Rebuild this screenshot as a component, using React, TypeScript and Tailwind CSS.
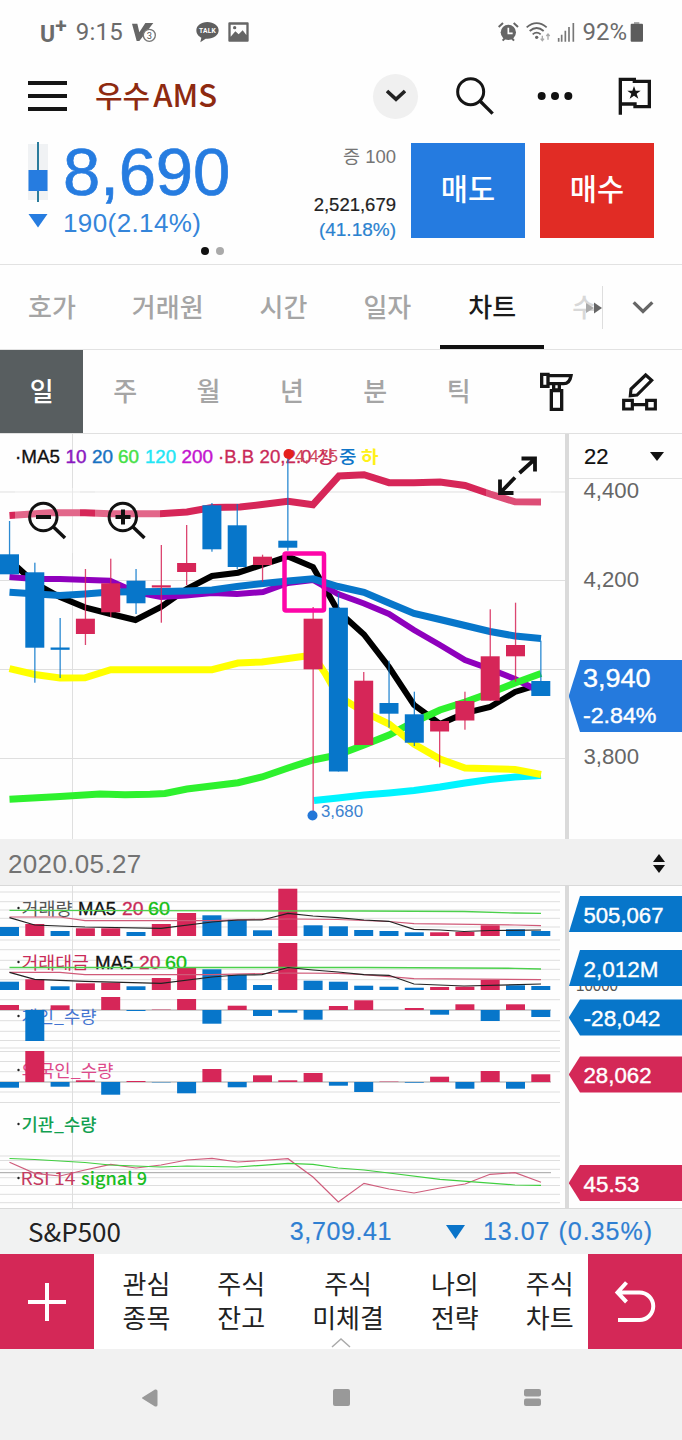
import React from "react";

const RED = "#d62658";
const BLUE = "#0776ca";
const SANS = "'Liberation Sans','Noto Sans CJK KR',sans-serif";
const KR = "'Noto Sans CJK KR',sans-serif";

const cx = (i: number) => 9.5 + 25.3 * i;

type LabelProps = {
  x: number;
  y: number;
  w: number;
  fill: string;
  size?: number;
  font?: string;
  weight?: number;
  stroke?: number;
  children: string;
};

function Label({ x, y, w, fill, size = 17.5, font = SANS, weight = 400, stroke = 0, children }: LabelProps) {
  return (
    <text
      x={x}
      y={y}
      textLength={w}
      lengthAdjust="spacingAndGlyphs"
      fontSize={size}
      fontFamily={font}
      fontWeight={weight}
      fill={fill}
      stroke={stroke ? fill : "none"}
      strokeWidth={stroke}
    >
      {children}
    </text>
  );
}

function Line({ pts, color, w }: { pts: string; color: string; w: number }) {
  return <polyline points={pts} fill="none" stroke={color} strokeWidth={w} strokeLinejoin="miter" />;
}

/* direction, body top, body bottom, wick top, wick bottom */
type Candle = ["u" | "d", number, number, number, number];
const candles: Candle[] = [
  ["d", 554.3, 574.3, 521, 574],
  ["d", 572.3, 647.7, 562.7, 682.7],
  ["d", 647.5, 649.8, 618, 678],
  ["u", 618.7, 634, 569, 645],
  ["u", 583.3, 612.3, 558.7, 617],
  ["d", 580.7, 603.3, 569, 614],
  ["u", 585.3, 587.5, 545, 622.7],
  ["u", 563, 572, 525, 585],
  ["d", 505.3, 549.3, 503, 551.7],
  ["d", 525.3, 567, 504, 569.3],
  ["u", 556.7, 565, 554.7, 581.7],
  ["d", 540.7, 547.7, 458, 550.7],
  ["u", 618.7, 669.3, 607, 814],
  ["d", 607.7, 771.5, 593, 771.5],
  ["u", 680.7, 745, 672, 745],
  ["d", 703, 713.7, 660.7, 727.7],
  ["d", 714.3, 742.7, 691.7, 746],
  ["u", 721, 731.5, 721, 767.3],
  ["u", 701, 720.5, 691.7, 729.7],
  ["u", 656.3, 700.7, 609.3, 700.7],
  ["u", 645, 656.3, 602.7, 681.7],
  ["d", 681, 696, 640.7, 696],
];

const volumeTops = [927, 924, 931, 928.3, 928.3, 932, 924, 913, 915.3, 919.7, 930.3, 888.7, 925.3, 926.3, 930, 931, 932.3, 932.3, 932, 925.3, 929.3, 931];
const amountTops = [981.7, 979.3, 986.3, 983.3, 982.7, 986.3, 978, 968, 969.3, 975, 985, 943, 980.7, 981.7, 985.7, 986.7, 987.7, 987, 986.7, 980, 985.3, 986];
const barDir = "duduuduudddudddddu" + "uudd";
const individual = [5, -31, 4.7, 0, 13, -1, 0.4, 11, -13.7, 4.3, -6, -2.7, -9.7, 4, 9.7, 0, 2, -4.7, 5.7, -11, 5.7, -7];
const foreigner = [-5.7, 31, -4.7, 1.7, -12.7, 1, -0.4, -11.3, 13, -5.3, 6.7, 1.7, 9, -3.7, -10, 0.4, -0.7, 5.3, -6.7, 11, -6.7, 7.7];

function Bars({ tops, base }: { tops: number[]; base: number }) {
  return (
    <>
      {tops.map((t, i) => (
        <rect key={i} x={cx(i) - 9.5} y={t} width={19} height={base - t} fill={barDir[i] === "u" ? RED : BLUE} />
      ))}
    </>
  );
}

function Signed({ values, zero }: { values: number[]; zero: number }) {
  return (
    <>
      {values.map((v, i) => (
        <rect key={i} x={cx(i) - 9.5} y={v > 0 ? zero - v : zero} width={19} height={Math.abs(v)} fill={v > 0 ? RED : BLUE} />
      ))}
    </>
  );
}

function StatusBar() {
  return (
    <div className="flex h-16 items-center pl-10 pr-9 font-[Roboto,sans-serif] text-2xl text-[#6b6b6b]">
      <span className="pt-1 text-[23px] font-bold leading-none">U</span>
      <span className="-mt-3 text-[21px] font-bold leading-none">+</span>
      <span className="ml-[9px] text-[24px] leading-none tracking-[0.3px]">9:15</span>
      <svg className="ml-[9px]" width="25" height="22" viewBox="0 0 75 66">
        <path d="M0 8h16l6 26L40 6h24L22 60h-8z" fill="#666" />
        <circle cx="52" cy="43" r="18" fill="#fff" stroke="#777" strokeWidth="4" />
        <text x="52" y="53" fontSize="28" textAnchor="middle" fontFamily="Roboto,sans-serif" fill="#555">3</text>
      </svg>
      <svg className="ml-[39px]" width="23" height="22" viewBox="0 0 69 66">
        <path d="M34 3C15 3 1 14 1 28c0 12 8 19 15 22l-3 14 16-11c22 2 39-9 39-25C68 14 53 3 34 3z" fill="#5f5f5f" />
        <text x="34" y="37" fontSize="20" fontWeight="700" textAnchor="middle" fontFamily="Roboto,sans-serif" fill="#fff" textLength="50">TALK</text>
      </svg>
      <svg className="ml-[9px]" width="21" height="20" viewBox="0 0 63 60">
        <path fillRule="evenodd" d="M4 1h55q3 0 3 3v52q0 3-3 3H4q-3 0-3-3V4q0-3 3-3zM8 8v36l14-16 10 9 12-12 11 14V8z" fill="#666" />
        <circle cx="20" cy="17" r="5" fill="#666" />
      </svg>
      <svg className="ml-auto" width="21" height="20" viewBox="0 0 63 60">
        <circle cx="31" cy="31" r="23" fill="#666" />
        <path d="M2 15L15 3M60 15L47 3M14 56l7-8M48 56l-7-8" stroke="#666" strokeWidth="6" />
        <path d="M31 17v17h13" stroke="#fff" strokeWidth="5" fill="none" />
      </svg>
      <svg className="ml-[7px]" width="25" height="20" viewBox="0 0 75 60">
        <path d="M2 16q30-25 60 0M11 27q21-18 42 0M20 37q12-10 24 0" fill="none" stroke="#666" strokeWidth="5.5" />
        <circle cx="32" cy="46" r="5" fill="#666" />
        <path d="M49 41v14m-5-5l5 6 5-6M66 53V36m-5 6l5-6 5 6" fill="none" stroke="#aaa" strokeWidth="4" />
      </svg>
      <svg className="ml-[6px]" width="18" height="20" viewBox="0 0 54 60">
        <path d="M5 59V48M14 59V38M25 59V26M36 59V15M49 59V3" stroke="#777" strokeWidth="5" />
      </svg>
      <span className="ml-[7px] text-[24px] leading-none">92%</span>
      <svg className="ml-[3px] mr-[2px]" width="14" height="20" viewBox="0 0 42 60">
        <rect x="12" y="0" width="16" height="8" fill="#aaa" />
        <rect x="2" y="5" width="37" height="54" rx="3" fill="#5c5c5c" />
      </svg>
    </div>
  );
}

function Header() {
  return (
    <div className="flex h-16 items-center pl-7 pr-[30px]">
      <div className="flex w-[39px] flex-col gap-[9px]">
        <div className="h-1 bg-[#151515]" />
        <div className="h-1 bg-[#151515]" />
        <div className="h-1 bg-[#151515]" />
      </div>
      <h1 className="ml-7 flex items-baseline pb-[5px] text-[30px] font-medium leading-none text-[#8e2a10]">
        <span>우수</span>
        <span className="ml-[3px] text-[31px]">AMS</span>
      </h1>
      <div className="ml-auto flex size-[45px] items-center justify-center rounded-full bg-[#f0f0f0]">
        <svg width="20" height="14" viewBox="0 0 60 42"><path d="M3 6l27 25L57 6" fill="none" stroke="#222" strokeWidth="11" /></svg>
      </div>
      <svg className="ml-[38px]" width="38" height="38" viewBox="0 0 114 114">
        <circle cx="44" cy="44" r="39" fill="none" stroke="#151515" strokeWidth="9" />
        <path d="M72 72l38 38" stroke="#151515" strokeWidth="10" />
      </svg>
      <svg className="ml-[43px]" width="36" height="10" viewBox="0 0 108 30">
        <circle cx="14" cy="15" r="12" fill="#111" /><circle cx="54" cy="15" r="12" fill="#111" /><circle cx="94" cy="15" r="12" fill="#111" />
      </svg>
      <svg className="ml-[45px]" width="34" height="38" viewBox="832 231 102 114">
        <path d="M839 344V238h42v6h45v76h-43v-8h-44" fill="none" stroke="#151515" strokeWidth="10" />
        <path d="M880 258l5 14h15l-12 9 5 15-13-9-13 9 5-15-12-9h15z" fill="#151515" />
      </svg>
    </div>
  );
}

function Price() {
  return (
    <div className="relative flex h-[137px] border-b border-[#e2e2e2] pl-7 pr-7 pt-[14px] font-['Liberation_Sans','Noto_Sans_CJK_KR',sans-serif]">
      <div className="flex w-[20px] flex-col">
        <svg width="20" height="90" viewBox="0 0 20 90">
          <rect x="0" y="2" width="20" height="56" fill="#f0f2f4" />
          <path d="M10 -1V60" stroke="#2b7c9c" strokeWidth="2" />
          <rect x="0.500" y="28" width="19" height="21" fill="#267ce0" />
          <path d="M0.500 72h19L10 85.500z" fill="#267ce0" />
        </svg>
      </div>
      <div className="ml-[15px] flex flex-col whitespace-nowrap text-[#267ce0]">
        <span className="text-[67px] leading-[60px] tracking-[-0.1px] [-webkit-text-stroke:0.7px_#267ce0]">8,690</span>
        <span className="pt-[7px] text-[26px] leading-7 tracking-[0.4px] text-[#3485da]">190(2.14%)</span>
      </div>
      <div className="ml-auto flex flex-col items-end whitespace-nowrap">
        <span className="pt-px text-[18.5px] leading-7 text-[#757575]">증 100</span>
        <span className="mt-[22px] text-[18.5px] leading-6 text-[#222] [-webkit-text-stroke:0.2px_#222]">2,521,679</span>
        <span className="text-[19px] leading-[25px] text-[#2b82cf] [-webkit-text-stroke:0.2px_#2b82cf]">(41.18%)</span>
      </div>
      <button className="ml-[15px] mt-px h-[95px] w-[114px] bg-[#257be0] text-[29.5px] font-medium text-white">매도</button>
      <button className="ml-[15px] mt-px h-[95px] w-[114px] bg-[#e12c25] text-[29.5px] font-medium text-white">매수</button>
      <div className="absolute left-[201px] top-[119px] flex gap-[7px]">
        <i className="size-2 rounded-full bg-[#111]" />
        <i className="size-2 rounded-full bg-[#aaa]" />
      </div>
    </div>
  );
}

function Tabs() {
  return (
    <div className="flex h-[85px] border-b border-[#e2e2e2] text-[26px] font-medium text-[#a5a5a5]">
      {["호가", "거래원", "시간", "일자"].map((t) => (
        <div key={t} className="flex items-center whitespace-nowrap px-7 pb-1">{t}</div>
      ))}
      <div className="ml-px flex items-center border-b-4 border-[#111] px-7 text-[#1a1a1a]">차트</div>
      <div className="relative flex w-[59px] items-center pb-1 pl-7 text-[#d8d8d8]">
        <span>수</span>
        <svg className="absolute left-[42px] top-[36px]" width="16" height="14" viewBox="0 0 16 14">
          <path d="M0 2l8 5-8 5z" fill="#aaa" /><path d="M8 1.500l8 5.500-8 5.500z" fill="#666" />
        </svg>
        <div className="absolute right-0 top-[21px] h-[43px] w-px bg-[#dedede]" />
      </div>
      <div className="flex flex-1 items-center justify-center">
        <svg width="22" height="15" viewBox="0 0 66 45"><path d="M5 7l28 27L61 7" fill="none" stroke="#666" strokeWidth="10" /></svg>
      </div>
    </div>
  );
}

function Periods() {
  return (
    <div className="flex h-[84px] border-b border-[#e0e0e0] text-[26px] font-medium text-[#a5a5a5]">
      <div className="flex w-[83.4px] items-center justify-center bg-[#585e60] pb-1 text-white">일</div>
      {["주", "월", "년", "분", "틱"].map((t) => (
        <div key={t} className="flex w-[83.4px] items-center justify-center pb-1">{t}</div>
      ))}
      <div className="flex flex-1 items-center justify-between pl-[40px] pr-[24px]">
        <svg width="33" height="40" viewBox="599 335 99 120" fill="none" stroke="#151515" strokeWidth="10">
          <path d="M604 342h19v36h-19zM625 346h67q-4 24-22 24h-45M640 370v19h17v-19M633 391h31v56h-31z" />
        </svg>
        <svg width="36" height="40" viewBox="843 335 108 120" fill="none" stroke="#151515" strokeWidth="9.500">
          <path d="M914 344l18 16-44 44-20 2 2-20zM848 420h26v26h-26zM917 420h26v26h-26zM874 433h43" />
        </svg>
      </div>
    </div>
  );
}

function MainChart() {
  return (
    <div className="flex h-[405px]">
      <svg width="565" height="405" viewBox="0 434 565 405">
        <path d="M0 492H565M0 580.500H565M0 669.500H565M0 758.500H565M72.500 434V839" stroke="#dfdfdf" strokeWidth="1" />
        <g>
          <Label x={15} y={463} w={45} fill="#111" stroke={0.3}>·MA5</Label>
          <Label x={65.500} y={463} w={21} fill="#8a17c0" stroke={0.4}>10</Label>
          <Label x={92} y={463} w={21} fill="#1772c2" stroke={0.4}>20</Label>
          <Label x={118} y={463} w={21} fill="#45e045" stroke={0.4}>60</Label>
          <Label x={145} y={463} w={31} fill="#22e6f5" stroke={0.4}>120</Label>
          <Label x={181.500} y={463} w={31.500} fill="#c314cf" stroke={0.4}>200</Label>
          <Label x={218} y={463} w={36} fill="#c92a58" stroke={0.3}>·B.B</Label>
          <Label x={259.500} y={463} w={52} fill="#c92a58" stroke={0.3}>20,2.0</Label>
          <Label x={317} y={463} w={17.500} fill="#c92a58" weight={500} font={KR}>상</Label>
          <Label x={339} y={463} w={17.500} fill="#0f75c8" weight={500} font={KR}>중</Label>
          <Label x={361} y={463} w={17.500} fill="#fff11a" weight={700} font={KR}>하</Label>
        </g>
        <Line w={6} color="#000" pts="9.5,560 34.700,583 60,597 85,607.300 110.700,614 135.500,620 161,607 186.600,589 212,576 238,572.700 262,565 288,556.500 313,567 338,611 364,634.500 389,667 414,705 440,724 465,713 490,707 515,692 541,684" />
        <Line w={6} color="#8f00bd" pts="9.5,577 34.700,579 60,579 110,580.700 135.500,592 161,597 186,595.500 212,593 237,594 263,592 288,583 313,580 338,594 364,603.500 389,614 414,630 440,645 465,660 490,669 515,679 541,692" />
        <Line w={7} color="#0776ca" pts="9.5,592.300 60,595.500 85,594 110,592 161,591.500 187,591 212,590 237,586.500 263,583.500 288,581 313,578.800 338,586.500 364,592.300 389,603 414,613.500 440,619.500 465,625.500 490,631.500 515,636 541,638.500" />
        <Line w={7} color="#2ef12e" pts="9.5,799.300 60,796.500 100,794 125,794.700 150,794.300 165,793.500 187,789 238,782.700 262,777 288,768 313,760 338,755 364,745 389,735 414,722 440,710 465,702 490,693 515,683 541,673.500" />
        <Line w={7} color="#00f4ff" pts="314,800.500 338,798 364,795 389,793 414,790.500 440,787 465,783 490,779.500 515,777 541,775.500" />
        <Line w={7} color={RED} pts="9.5,515.500 50,512.700 85,512.700 110,513.800 160,513.800 187,512 212,507.500 240,507 262,504.500 288,501.300 313,504.700 339,476 364,474.700 389,482.700 414,482.700 440,482 465,485.500 490,494 515,501.800 541,502" />
        <Line w={7} color="#ffff00" pts="9.5,668.700 34.700,674.500 60,678 85,677.800 110.700,669.700 212,669.700 238,663 262,662 288,658.500 313,655 325,673 338,696 364,712 389,724 414,744 440,759 465,768 515,769.500 541,774.500" />
        <rect x="15" y="488" width="65" height="65" fill="#fff" opacity="0.3" />
        <rect x="95" y="488" width="65" height="65" fill="#fff" opacity="0.3" />
        <rect x="486" y="445" width="65" height="65" fill="#fff" opacity="0.18" />
        {candles.map(([d, bt, bb, wt, wb], i) => (
          <g key={i} fill={d === "u" ? RED : BLUE}>
            <rect x={cx(i) - 0.6} y={wt} width={1.3} height={wb - wt} opacity="0.85" />
            <rect x={cx(i) - 9.5} y={bt} width={19} height={bb - bt} />
          </g>
        ))}
        <circle cx="288.500" cy="454" r="5" fill="#e5201c" />
        <Label x={295} y={462} w={43} fill="#cf4a5c" size={17}>4,475</Label>
        <circle cx="312.500" cy="815.500" r="5" fill="#2377d8" />
        <Label x={321} y={817} w={42} fill="#3c82cf" size={17}>3,680</Label>
        <rect x="284.500" y="553.500" width="39.500" height="57" rx="1.500" fill="none" stroke="#fd05a8" strokeWidth="4.500" />
        <g fill="none" stroke="#111" strokeWidth="3">
          <circle cx="43.300" cy="517" r="13.700" />
          <path d="M53.500 527l11.500 11" strokeWidth="3.500" />
          <path d="M36 517h15" strokeWidth="4" />
          <circle cx="122.800" cy="517" r="13.700" />
          <path d="M133 527l11.500 11" strokeWidth="3.500" />
          <path d="M115.500 517h15M123 509.500v15" strokeWidth="4" />
          <path d="M521.500 458.500h13.500v13M535 459L519.500 473M515 477.500L501 492M500 479.500v13.500h13.500" strokeWidth="3.800" />
        </g>
      </svg>
      <div className="w-1 shrink-0 bg-[#dadada]" />
      <div className="flex flex-1 flex-col">
        <div className="flex h-[45px] items-center justify-between border-b border-[#e2e2e2] pl-[15px] pr-[17px] font-['Liberation_Sans',sans-serif] text-[22px] text-[#111] [-webkit-text-stroke:0.2px_#111]">
          <span>22</span>
          <svg width="16" height="10" viewBox="0 0 16 10"><path d="M1 1h14L8 10z" fill="#111" /></svg>
        </div>
        <svg width="113" height="360" viewBox="569 479 113 360">
          <Label x={583.500} y={498} w={55.500} size={22} fill="#666">4,400</Label>
          <Label x={583.500} y={587} w={55.500} size={22} fill="#666">4,200</Label>
          <Label x={583.500} y={675.500} w={55.500} size={22} fill="#666">4,000</Label>
          <Label x={583.500} y={764} w={55.500} size={22} fill="#666">3,800</Label>
          <path d="M580 660H682V732H580L568.700 696z" fill="#257add" />
          <Label x={583} y={686.500} w={67.500} size={25} fill="#fff" stroke={0.4}>3,940</Label>
          <Label x={583} y={722.500} w={73.500} size={22} fill="#fff" stroke={0.4}>-2.84%</Label>
        </svg>
      </div>
    </div>
  );
}

function Tag({ y, color, text, w, slanted }: { y: number; color: string; text: string; w: number; slanted?: boolean }) {
  const d = slanted ? `M580 ${y}H682v36H569z` : `M580 ${y}H682v36H580l-11.300 -18z`;
  return (
    <>
      <path d={d} fill={color} />
      <Label x={583.5} y={y + 26.5} w={w} size={22.5} fill="#fff" stroke={0.4}>{text}</Label>
    </>
  );
}

function SubCharts() {
  const grid = [892, 901.7, 910, 918.3, 927, 940, 949.7, 960.3, 969.3, 979.7, 999.7, 1020.7, 1031.3, 1040.5, 1048, 1051.5, 1061.5, 1071.7, 1092, 1102.5, 1156, 1160.5, 1169.3, 1177.7, 1185.5, 1194.3, 1202.7];
  return (
    <div className="flex h-[324px] border-y border-[#d9d9d9]">
      <svg width="565" height="322" viewBox="0 886 565 322">
        {grid.map((y) => (
          <path key={y} d={`M0 ${y}H560`} stroke="#dedede" strokeWidth="1" />
        ))}
        <path d="M72.500 886V1209" stroke="#dedede" />
        <path d="M0 1010H551M0 1082H551M0 1172.700H551" stroke="#a2a2a2" />
        {[908, 962, 1016, 1070, 1124, 1178].map((y) => (
          <circle key={y} cx="18.500" cy={y} r="1.200" fill="#222" />
        ))}
        <Label x={21.500} y={915} w={51} fill="#555" font={KR}>거래량</Label>
        <Label x={78} y={915} w={38} fill="#111" stroke={0.3}>MA5</Label>
        <Label x={122} y={915} w={21.500} fill="#c92a58" stroke={0.3}>20</Label>
        <Label x={148} y={915} w={22} fill="#12bd12" stroke={0.3}>60</Label>
        <Label x={21.500} y={969} w={67.500} fill="#c92a58" font={KR}>거래대금</Label>
        <Label x={95} y={969} w={38.500} fill="#111" stroke={0.3}>MA5</Label>
        <Label x={139} y={969} w={21.500} fill="#c92a58" stroke={0.3}>20</Label>
        <Label x={165} y={969} w={22} fill="#12bd12" stroke={0.3}>60</Label>
        <Label x={21.500} y={1023} w={75} fill="#4474d0" font={KR}>개인_수량</Label>
        <Label x={21.500} y={1077} w={92} fill="#dd4a8b" font={KR}>외국인_수량</Label>
        <Label x={21.500} y={1131} w={75} fill="#12a050" weight={500} font={KR}>기관_수량</Label>
        <Label x={20.500} y={1185} w={55} fill="#c43a60" font={KR}>RSI 14</Label>
        <Label x={81} y={1185} w={66} fill="#19bd22" font={KR} weight={500}>signal 9</Label>
        <Bars tops={volumeTops} base={936} />
        <Bars tops={amountTops} base={990} />
        <Signed values={individual} zero={1010} />
        <Signed values={foreigner} zero={1082} />
        <Line w={1.3} color="#4bd04b" pts="9.5,910.300 364,911 464,911.5 515,913 541,913.300" />
        <Line w={1.2} color="#d05a78" pts="9.5,917 60,917 85,920.700 212,920.700 262,919.300 288,919 338,919.500 389,921.500 414,923.700 515,925 541,925.700" />
        <Line w={1.2} color="#222" pts="9.5,917.700 34.700,925 85,927 161,928.300 212,922 238,920 262,920 288,913.300 313,916 338,917.700 364,920 389,921.300 414,929.300 440,930 464,931.500 490,930.500 541,930" />
        <Line w={1.3} color="#4bd04b" pts="9.5,967.500 364,967.500 515,968.300 541,969" />
        <Line w={1.2} color="#d05a78" pts="9.5,972.300 60,972.300 85,974.700 212,974.700 288,973 338,973.300 364,974.700 414,978.700 541,979.700" />
        <Line w={1.2} color="#222" pts="9.5,972.300 34.700,979.300 85,981.300 161,983.300 212,977 238,975 262,974.700 288,967.500 313,970 338,972 364,974.700 389,975.300 414,984 464,986 541,984" />
        <Line w={1.2} color="#cf5d7c" pts="9.5,1162.300 34.700,1173.300 60,1176 85,1170 110.700,1164.300 136,1168 161,1165 187,1160 212,1158.300 238,1162 262,1160.500 288,1158.700 313,1177 338.300,1202 364,1183.300 389,1189 414,1193 440,1188 465,1184 490,1174.300 515,1172.700 541,1182.300" />
        <Line w={1.2} color="#3fcf3f" pts="9.5,1158.500 34.700,1159.500 85,1162.500 110,1165 161,1167 187,1166 237,1167 262,1165.300 288,1163.300 313,1164.300 338,1168 364,1170 389,1173 440,1179.300 515,1185 541,1185.300" />
      </svg>
      <div className="w-1 shrink-0 bg-[#dadada]" />
      <svg width="113" height="322" viewBox="569 886 113 322">
        <Label x={576} y={991} w={42} size={16} fill="#555">10000</Label>
        <Tag y={896} color={BLUE} text="505,067" w={80} slanted />
        <Tag y={950} color={BLUE} text="2,012M" w={75} slanted />
        <Tag y={999.5} color={BLUE} text="-28,042" w={77} />
        <Tag y={1056.5} color="#d42857" text="28,062" w={68} />
        <Tag y={1165} color="#d42857" text="45.53" w={56} />
      </svg>
    </div>
  );
}

function BottomNav() {
  const items = [["관심", "종목"], ["주식", "잔고"], ["주식", "미체결"], ["나의", "전략"], ["주식", "차트"]];
  return (
    <div className="relative flex h-[95px] bg-white">
      <div className="flex w-[94px] shrink-0 items-center justify-center bg-[#d42857]">
        <svg width="40" height="40" viewBox="0 0 40 40"><path d="M20 1v38M1 20h38" stroke="#fff" strokeWidth="4" /></svg>
      </div>
      <div className="flex min-w-0 flex-1 items-center overflow-hidden pb-[3px] pl-[5px]">
        {items.map(([a, b]) => (
          <div key={a + b} className="shrink-0 px-[23.500px] text-center text-[26px] leading-[34px] text-[#222]">
            <div>{a}</div>
            <div>{b}</div>
          </div>
        ))}
      </div>
      <div className="flex w-[94px] shrink-0 items-center justify-center bg-[#d42857]">
        <svg width="42" height="42" viewBox="0 0 42 42" fill="none" stroke="#fff" strokeWidth="4">
          <path d="M12.500 1.500L3.500 11.500l9 9.500M4 11.500h21.500a13.700 13.700 0 0 1 0 27.500H4" />
        </svg>
      </div>
      <svg className="absolute left-[331px] top-[83px]" width="20" height="11" viewBox="0 0 20 11"><path d="M1 10l9-8 9 8" fill="none" stroke="#aaa" strokeWidth="1.500" /></svg>
    </div>
  );
}

export default function App() {
  return (
    <div className="flex h-[1440px] w-[682px] flex-col overflow-hidden bg-[#fefefe] font-['Noto_Sans_CJK_KR',sans-serif]">
      <StatusBar />
      <Header />
      <Price />
      <Tabs />
      <Periods />
      <MainChart />
      <div className="flex h-[46px] items-center justify-between bg-[#f0f0f0] pl-[8px] pr-[17px] pt-1 font-['Liberation_Sans',sans-serif] text-[26px] tracking-[0.35px] text-[#737373]">
        <span>2020.05.27</span>
        <svg width="12" height="20" viewBox="0 0 12 20"><path d="M6 0l6 8H0zM6 19l6-8H0z" fill="#111" /></svg>
      </div>
      <SubCharts />
      <div className="flex h-[45px] items-center whitespace-nowrap bg-[#f1f2f2] pl-7 pr-[29px] text-[26px] text-[#222]">
        <span className="pb-[3px]">S&amp;P500</span>
        <span className="ml-auto font-['Liberation_Sans',sans-serif] text-[25px] tracking-[0.6px] text-[#2f7fd2] [-webkit-text-stroke:0.2px_#2f7fd2]">3,709.41</span>
        <svg className="ml-[54px]" width="19" height="15" viewBox="0 0 19 15"><path d="M0 1h19L9.500 15z" fill="#0a74c9" /></svg>
        <span className="ml-[18px] font-['Liberation_Sans',sans-serif] text-[25px] tracking-[1px] text-[#2f7fd2] [-webkit-text-stroke:0.2px_#2f7fd2]">13.07 (0.35%)</span>
      </div>
      <BottomNav />
      <div className="flex flex-1 items-center justify-between bg-[#f1f1f1] px-[141px] pt-[6px]">
        <svg width="17" height="18" viewBox="0 0 17 18"><path d="M2 8Q0 9 2 10L14 17.500Q16.500 18 16.500 16V2Q16.500 0 14 .5z" fill="#999" /></svg>
        <svg width="17" height="17" viewBox="0 0 17 17"><rect width="17" height="17" rx="2" fill="#999" /></svg>
        <svg width="17" height="17" viewBox="0 0 17 17"><rect width="17" height="7.500" rx="2" fill="#999" /><rect y="9.500" width="17" height="7.500" rx="2" fill="#999" /></svg>
      </div>
    </div>
  );
}
